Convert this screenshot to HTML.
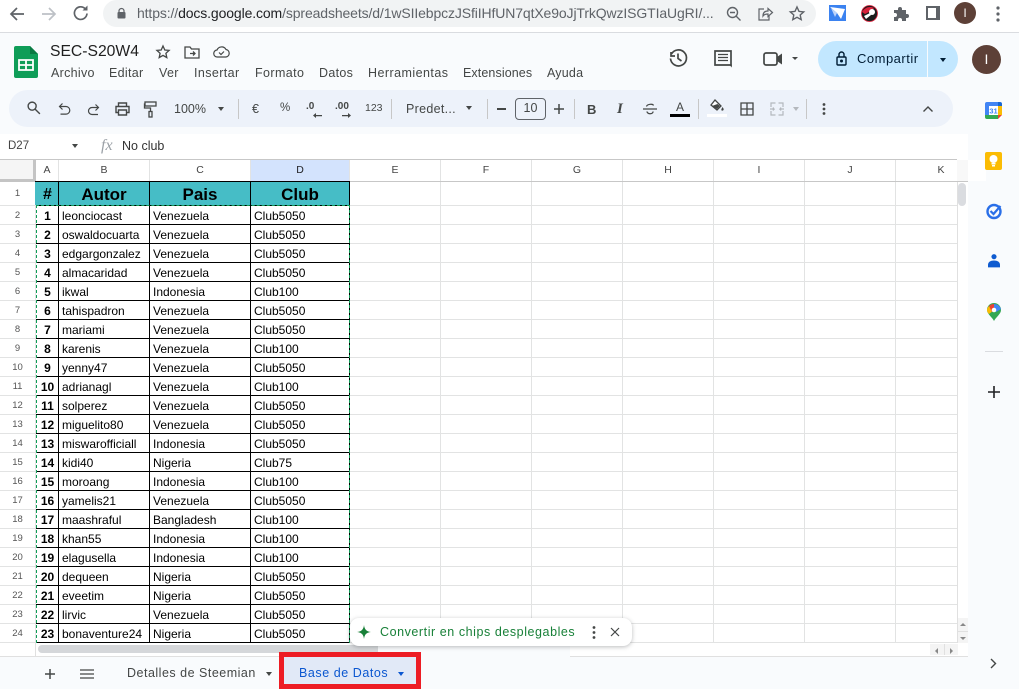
<!DOCTYPE html>
<html lang="es"><head><meta charset="utf-8"><title>SEC-S20W4</title>
<style>
html,body{margin:0;padding:0;width:1019px;height:689px;overflow:hidden;background:#f9fbfd;font-family:"Liberation Sans",sans-serif;color:#444746}
#root{position:relative;width:1019px;height:689px;overflow:hidden}
.a{position:absolute}
.t{position:absolute;white-space:nowrap;line-height:1}
svg{position:absolute;overflow:visible}
.m{font-size:12.5px;top:67px;color:#444746;letter-spacing:.3px}
.tb{font-size:12.5px;top:103px;color:#444746}
.sep{position:absolute;top:99px;width:1px;height:20px;background:#c7c7c7}
.caret{position:absolute;width:0;height:0;border-left:3.5px solid transparent;border-right:3.5px solid transparent;border-top:4px solid #444746}
.ch{position:absolute;top:160px;height:21px;line-height:21px;text-align:center;font-size:10.5px;color:#444;background:#fff}
.rn{position:absolute;left:0;width:35px;text-align:center;font-size:9.5px;color:#555;line-height:19px;height:19px}
table{position:absolute;left:35px;top:181px;border-collapse:collapse;table-layout:fixed;width:314px;background:#fff}
td{border:1px solid #000;height:19px;padding:2px 2px 0 3px;font-size:12px;line-height:16px;color:#000;white-space:nowrap;overflow:hidden;box-sizing:border-box}
tr{height:19px}
tr.h{height:24px}
tr.h td{background:#46bdc6;font-weight:bold;font-size:17px;line-height:21px;text-align:center;height:24px;padding:2px 0 0}
td:first-child{font-weight:bold;text-align:center;font-size:12px;padding:2px 0 0 1px}
tr.h td:first-child{font-size:16px;padding:2px 0 0 1px}
</style></head><body><div id="root">

<!-- browser bar -->
<div class="a" style="left:0;top:0;width:1019px;height:32px;background:#fff;border-bottom:1px solid #dadce0"></div>
<svg style="left:8px;top:4px" width="20" height="20" viewBox="0 0 20 20" fill="none" stroke="#5f6368" stroke-width="1.700"><path d="M16 10H3M9 4l-6 6 6 6"/></svg>
<svg style="left:39px;top:4px" width="20" height="20" viewBox="0 0 20 20" fill="none" stroke="#bdc1c6" stroke-width="1.700"><path d="M3 10h13M10 4l6 6-6 6"/></svg>
<svg style="left:71px;top:3px" width="20" height="20" viewBox="0 0 20 20" fill="none" stroke="#5f6368" stroke-width="1.700"><path d="M16 10.500A6.300 6.300 0 1 1 14 5.500"/><path d="M16.500 2.500V7.500H11.500z" fill="#5f6368" stroke="none"/></svg>
<div class="a" style="left:103px;top:0;width:713px;height:27px;background:#f1f3f4;border-radius:14px"></div>
<svg style="left:117px;top:8px" width="9" height="11" viewBox="0 0 9 11"><path d="M2 4.500V3a2.500 2.500 0 0 1 5 0v1.500" fill="none" stroke="#5f6368" stroke-width="1.200"/><rect x=".5" y="4" width="8" height="6.500" rx="1" fill="#5f6368"/></svg>
<div class="t" style="left:137px;top:6px;font-size:14px;letter-spacing:-.12px;color:#5f6368">https://<span style="color:#202124">docs.google.com</span>/spreadsheets/d/1wSIIebpczJSfiIHfUN7qtXe9oJjTrkQwzISGTIaUgRI/...</div>
<svg style="left:726px;top:6px" width="15" height="15" viewBox="0 0 15 15" fill="none" stroke="#5f6368" stroke-width="1.400"><circle cx="6.500" cy="6.500" r="5"/><path d="M10 10l4.500 4.500M4 6.500h5"/></svg>
<svg style="left:758px;top:7px" width="15" height="14" viewBox="0 0 15 14" fill="none" stroke="#5f6368" stroke-width="1.200"><path d="M6 2H1v11h10V9"/><path d="M5 9c0-3.500 2-5 5-5V1.500l4.500 4-4.500 4V7C8 7 6 7.500 5 9z"/></svg>
<svg style="left:789px;top:6px" width="16" height="15" viewBox="0 0 16 15" fill="none" stroke="#5f6368" stroke-width="1.400"><path d="M8 1l2 4.400 4.700.5-3.500 3.100 1 4.600L8 11.300l-4.200 2.300 1-4.600L1.300 5.900 6 5.400z"/></svg>
<svg style="left:829px;top:5px" width="17" height="16" viewBox="0 0 17 16"><rect width="17" height="16" fill="#3b82f0"/><path d="M1 2l15 2-4 10-4-6z" fill="#fff"/><path d="M2 3l6 5-2 4z" fill="#bcd3fb"/></svg>
<svg style="left:861px;top:5px" width="17" height="17" viewBox="0 0 17 17"><circle cx="8.500" cy="8.500" r="8" fill="#1c1c1c" stroke="#d8213b" stroke-width=".8"/><path d="M1 7C4 2 9 1 13 3l-3 3-6 3z" fill="#d8213b"/><circle cx="11" cy="7" r="3" fill="#fff"/><path d="M3 11l6-3 1 2-5 4z" fill="#fff"/></svg>
<svg style="left:893px;top:6px" width="16" height="16" viewBox="0 0 16 16"><path d="M1 4h4V3a2 2 0 0 1 4 0v1h4v4h1a2 2 0 0 1 0 4h-1v3H9v-1a2 2 0 0 0-4 0v1H1v-4h1a2 2 0 0 0 0-4H1z" fill="#5f6368"/></svg>
<div class="a" style="left:926px;top:6px;width:8px;height:10px;border:2px solid #5f6368;border-right-width:4px;background:#fff"></div>
<div class="a" style="left:954px;top:2px;width:22px;height:22px;border-radius:50%;background:#5d4037"></div>
<div class="t" style="left:954px;top:7px;width:22px;text-align:center;font-size:12px;color:#fff">I</div>
<svg style="left:995px;top:6px" width="6" height="16" viewBox="0 0 6 16" fill="#5f6368"><circle cx="3" cy="2" r="1.600"/><circle cx="3" cy="8" r="1.600"/><circle cx="3" cy="14" r="1.600"/></svg>

<!-- sheets header -->
<svg style="left:14px;top:46px" width="24" height="32" viewBox="0 0 24 32"><path d="M2 0h14l8 8v22a2 2 0 0 1-2 2H2a2 2 0 0 1-2-2V2a2 2 0 0 1 2-2z" fill="#0f9d58"/><path d="M16 0l8 8h-8z" fill="#0a7a43"/><path d="M5 14h14v10H5z" fill="none" stroke="#fff" stroke-width="1.800"/><path d="M5 19h14M12 14v10" stroke="#fff" stroke-width="1.800"/></svg>
<div class="t" style="left:50px;top:44px;font-size:15.700px;color:#1f1f1f">SEC-S20W4</div>
<svg style="left:155px;top:44px" width="16" height="16" viewBox="0 0 16 16" fill="none" stroke="#444746" stroke-width="1.300"><path d="M8 2l1.800 4 4.300.4-3.200 2.900.9 4.300L8 11.400l-3.800 2.200.9-4.300L1.900 6.400 6.200 6z"/></svg>
<svg style="left:184px;top:45px" width="16" height="14" viewBox="0 0 16 14" fill="none" stroke="#444746" stroke-width="1.300"><path d="M1 2h5l1.500 2H15v9H1z"/><path d="M6 8.500h5M9 6.500l2 2-2 2"/></svg>
<svg style="left:213px;top:45px" width="17" height="13" viewBox="0 0 17 13" fill="none" stroke="#444746" stroke-width="1.200"><path d="M4.500 12a3.500 3.500 0 0 1-.5-7A5 5 0 0 1 13 4.500 3.800 3.800 0 0 1 13 12z"/><path d="M6 7.500l2 2 3-3"/></svg>
<div class="t m" style="left:51px">Archivo</div>
<div class="t m" style="left:109px">Editar</div>
<div class="t m" style="left:159px">Ver</div>
<div class="t m" style="left:194px;letter-spacing:.4px">Insertar</div>
<div class="t m" style="left:255px;letter-spacing:.4px">Formato</div>
<div class="t m" style="left:319px">Datos</div>
<div class="t m" style="left:368px;letter-spacing:.45px">Herramientas</div>
<div class="t m" style="left:463px;letter-spacing:.1px">Extensiones</div>
<div class="t m" style="left:547px;letter-spacing:.2px">Ayuda</div>

<svg style="left:668px;top:48px" width="20" height="20" viewBox="0 0 20 20" fill="none" stroke="#444746" stroke-width="1.700"><path d="M3 4v4h4"/><path d="M2.500 10.500A8 8 0 1 0 3.500 6"/><path d="M10 5.500V10.500l3.500 2.500"/></svg>
<svg style="left:714px;top:50px" width="19" height="18" viewBox="0 0 19 18" fill="none" stroke="#444746" stroke-width="1.700"><path d="M1 1h16v14h-2H1z"/><path d="M15 14.500h2.800V17.500z" fill="#444746" stroke="none"/><path d="M4 4.500h10M4 7.500h10M4 10.500h10" stroke-width="1.300"/></svg>
<svg style="left:763px;top:52px" width="20" height="14" viewBox="0 0 20 14" fill="none" stroke="#444746" stroke-width="1.700"><rect x="1" y="1" width="13" height="12" rx="2"/><path d="M14 5l5-3.500v11L14 9z" fill="#444746" stroke="none"/></svg>
<div class="caret" style="left:792px;top:57px;border-left-width:3px;border-right-width:3px;border-top-width:3px"></div>
<div class="a" style="left:818px;top:41px;width:140px;height:36px;border-radius:18px;background:#c2e7ff"></div>
<div class="a" style="left:927px;top:41px;width:1px;height:36px;background:#f9fbfd"></div>
<svg style="left:836px;top:51px" width="11" height="15" viewBox="0 0 11 15" fill="none" stroke="#001d35" stroke-width="1.400"><path d="M3 6V3.500a2.500 2.500 0 0 1 5 0V6"/><rect x="1" y="6" width="9" height="8" rx="1"/><circle cx="5.500" cy="10" r=".8" fill="#001d35"/></svg>
<div class="t" style="left:857px;top:52px;font-size:13px;letter-spacing:.5px;color:#001d35">Compartir</div>
<div class="caret" style="left:940px;top:58px;border-top-color:#001d35"></div>
<div class="a" style="left:972px;top:45px;width:29px;height:29px;border-radius:50%;background:#5d4037"></div>
<div class="t" style="left:972px;top:52px;width:29px;text-align:center;font-size:14px;color:#fff">I</div>

<!-- toolbar -->
<div class="a" style="left:9px;top:90px;width:944px;height:37px;border-radius:19px;background:#edf2fa"></div>
<svg style="left:27px;top:101px" width="14" height="14" viewBox="0 0 15 15" fill="none" stroke="#444746" stroke-width="1.500"><circle cx="5.500" cy="5.500" r="4.300"/><path d="M8.800 8.800l5 5"/></svg>
<svg style="left:58px;top:102px" width="13" height="14" viewBox="0 0 13 14" fill="none" stroke="#444746" stroke-width="1.200"><path d="M4.500 1.500L1.500 4.500l3 3"/><path d="M1.500 4.500H8a3.800 3.800 0 0 1 0 7.600H2.500"/></svg>
<svg style="left:87px;top:102px" width="13" height="14" viewBox="0 0 13 14" fill="none" stroke="#444746" stroke-width="1.200"><path d="M8.500 2.500l3 3-3 3"/><path d="M11.500 5.500H5a3.500 3.500 0 0 0 0 7h6"/></svg>
<svg style="left:115px;top:102px" width="15" height="14" viewBox="0 0 15 14" fill="none" stroke="#444746" stroke-width="1.400"><path d="M3.500 4V1h8v3"/><path d="M3.500 10.500H1V4.500h13v6h-2.500"/><path d="M3.500 8h8v5h-8z"/></svg>
<svg style="left:144px;top:101px" width="13" height="17" viewBox="0 0 13 17" fill="none" stroke="#444746" stroke-width="1.300"><rect x="1" y="1" width="11" height="4"/><path d="M1 3H.5v4h6v3"/><rect x="5" y="10.500" width="3" height="5.500"/></svg>
<div class="t tb" style="left:174px">100%</div>
<div class="caret" style="left:218px;top:107px"></div>
<div class="sep" style="left:238px"></div>
<div class="t tb" style="left:252px;font-size:12.500px">€</div>
<div class="t tb" style="left:280px;font-size:11.500px">%</div>
<div class="t" style="left:306px;top:102px;font-size:10px;font-weight:bold;color:#444746">.0</div>
<svg style="left:313px;top:112px" width="10" height="7" viewBox="0 0 10 7" fill="#444746"><path d="M9 3v1.200H3V6L0 3.500 3 1v2z"/></svg>
<div class="t" style="left:335px;top:102px;font-size:10px;font-weight:bold;color:#444746">.00</div>
<svg style="left:342px;top:112px" width="10" height="7" viewBox="0 0 10 7" fill="#444746"><path d="M0 3v1.200h6V6l3-2.500L6 1v2z"/></svg>
<div class="t" style="left:365px;top:103px;font-size:10.500px;color:#444746">123</div>
<div class="sep" style="left:391px"></div>
<div class="t tb" style="left:406px;letter-spacing:.3px">Predet...</div>
<div class="caret" style="left:466px;top:106px"></div>
<div class="sep" style="left:487px"></div>
<div class="a" style="left:497px;top:108px;width:9px;height:1.500px;background:#444746"></div>
<div class="a" style="left:515px;top:98px;width:29px;height:20px;border:1px solid #5f6368;border-radius:4px"></div>
<div class="t" style="left:515px;top:102px;width:31px;text-align:center;font-size:12.500px;color:#444746">10</div>
<svg style="left:554px;top:104px" width="10" height="10" viewBox="0 0 10 10" stroke="#444746" stroke-width="1.500"><path d="M0 5h10M5 0v10"/></svg>
<div class="sep" style="left:574px"></div>
<div class="t" style="left:587px;top:103px;font-size:13px;font-weight:bold;color:#444746">B</div>
<div class="t" style="left:617px;top:102px;font-size:15px;font-style:italic;font-family:'Liberation Serif',serif;font-weight:bold;color:#444746">I</div>
<svg style="left:643px;top:102px" width="14" height="14" viewBox="0 0 14 14" fill="none" stroke="#444746" stroke-width="1.200"><path d="M0 7h14M3.500 4.500C4 2 10 1.500 10.500 3.500M3.800 9.500C5 12.500 9.500 12.500 10.200 9.500"/></svg>
<div class="t" style="left:676px;top:101px;font-size:12px;color:#444746">A</div>
<div class="a" style="left:670px;top:114px;width:20px;height:3px;background:#000"></div>
<div class="sep" style="left:698px"></div>
<svg style="left:710px;top:99px" width="14" height="13" viewBox="0 0 14 13"><path d="M5 1l6 6-4 4-6-5z" fill="#fff" stroke="#444746" stroke-width="1.300"/><path d="M2 7l5.500-2L10 7l-3 3z" fill="#444746"/><path d="M12.500 8c1 1.500 1.500 2 1 3s-2 .8-2.200 0c-.1-.8.600-1.800 1.200-3z" fill="#444746"/></svg>
<div class="a" style="left:707px;top:114px;width:20px;height:3px;background:#fff"></div>
<svg style="left:740px;top:102px" width="14" height="14" viewBox="0 0 14 14" fill="none" stroke="#444746" stroke-width="1.300"><path d="M1 1h12v12H1zM1 7h12M7 1v12"/></svg>
<svg style="left:770px;top:102px" width="14" height="14" viewBox="0 0 14 14" fill="none" stroke="#b4b8bd" stroke-width="1.200"><path d="M5.500 1H1v4M1 9v4h4.500M8.500 1H13v4M13 9v4H8.500M0 7h4l-1-1.500M4 7l-1 1.500M14 7h-4l1-1.500M10 7l1 1.500"/></svg>
<div class="caret" style="left:793px;top:107px;border-top-color:#b4b8bd"></div>
<div class="sep" style="left:806px"></div>
<svg style="left:822px;top:103px" width="4" height="12" viewBox="0 0 4 12" fill="#444746"><circle cx="2" cy="1.500" r="1.400"/><circle cx="2" cy="6" r="1.400"/><circle cx="2" cy="10.500" r="1.400"/></svg>
<svg style="left:923px;top:106px" width="10" height="6" viewBox="0 0 10 6" fill="none" stroke="#444746" stroke-width="1.400"><path d="M.5 5.500L5 1l4.500 4.500"/></svg>

<!-- formula bar -->
<div class="a" style="left:0;top:134px;width:968px;height:26px;background:#fff"></div>
<div class="t" style="left:8px;top:141px;font-size:11.500px;color:#444">D27</div>
<div class="caret" style="left:72px;top:144px"></div>
<div class="t" style="left:101px;top:138px;font-size:16px;font-style:italic;font-family:'Liberation Serif',serif;color:#9aa0a6">fx</div>
<div class="t" style="left:122px;top:140px;font-size:12.500px;color:#333">No club</div>

<!-- grid -->
<div class="a" style="left:0;top:159px;width:957px;height:484px;background:#fff"></div>
<div class="a" style="left:0;top:206px;width:957px;height:437px;background-image:repeating-linear-gradient(to bottom,transparent 0,transparent 18px,#e2e3e3 18px,#e2e3e3 19px)"></div>
<svg style="left:0;top:159px" width="957" height="484" viewBox="0 0 957 484" shape-rendering="crispEdges" stroke="#e2e3e3" fill="none"><path d="M35.500 0V484M58.500 0V23M149.500 0V23M250.500 0V23M349.500 0V484M440.500 0V484M531.500 0V484M622.500 0V484M713.500 0V484M804.500 0V484M895.500 0V484M0 46.500H957"/><path d="M0 .5H957M0 22.500H957" stroke="#c7c7c7"/></svg>
<div class="a" style="left:0;top:160px;width:36px;height:22px;background:#f5f5f5;border-right:3px solid #c4c4c4;border-bottom:3px solid #c4c4c4;box-sizing:border-box"></div>
<div class="ch" style="left:36px;width:22px">A</div>
<div class="ch" style="left:59px;width:90px">B</div>
<div class="ch" style="left:150px;width:100px">C</div>
<div class="ch" style="left:251px;width:98px;background:#d3e3fd;color:#202124">D</div>
<div class="ch" style="left:350px;width:90px">E</div>
<div class="ch" style="left:441px;width:90px">F</div>
<div class="ch" style="left:532px;width:90px">G</div>
<div class="ch" style="left:623px;width:90px">H</div>
<div class="ch" style="left:714px;width:90px">I</div>
<div class="ch" style="left:805px;width:90px">J</div>
<div class="ch" style="left:896px;width:90px">K</div>

<div class="rn" style="top:183px;line-height:21px">1</div>
<div class="rn" style="top:206px">2</div><div class="rn" style="top:225px">3</div><div class="rn" style="top:244px">4</div><div class="rn" style="top:263px">5</div><div class="rn" style="top:282px">6</div><div class="rn" style="top:301px">7</div><div class="rn" style="top:320px">8</div><div class="rn" style="top:339px">9</div><div class="rn" style="top:358px">10</div><div class="rn" style="top:377px">11</div><div class="rn" style="top:396px">12</div><div class="rn" style="top:415px">13</div><div class="rn" style="top:434px">14</div><div class="rn" style="top:453px">15</div><div class="rn" style="top:472px">16</div><div class="rn" style="top:491px">17</div><div class="rn" style="top:510px">18</div><div class="rn" style="top:529px">19</div><div class="rn" style="top:548px">20</div><div class="rn" style="top:567px">21</div><div class="rn" style="top:586px">22</div><div class="rn" style="top:605px">23</div><div class="rn" style="top:624px">24</div>

<table><colgroup><col style="width:23px"><col style="width:91px"><col style="width:101px"><col style="width:99px"></colgroup>
<tr class="h"><td>#</td><td>Autor</td><td>Pais</td><td>Club</td></tr>
<tr><td>1</td><td>leonciocast</td><td>Venezuela</td><td>Club5050</td></tr>
<tr><td>2</td><td>oswaldocuarta</td><td>Venezuela</td><td>Club5050</td></tr>
<tr><td>3</td><td>edgargonzalez</td><td>Venezuela</td><td>Club5050</td></tr>
<tr><td>4</td><td>almacaridad</td><td>Venezuela</td><td>Club5050</td></tr>
<tr><td>5</td><td>ikwal</td><td>Indonesia</td><td>Club100</td></tr>
<tr><td>6</td><td>tahispadron</td><td>Venezuela</td><td>Club5050</td></tr>
<tr><td>7</td><td>mariami</td><td>Venezuela</td><td>Club5050</td></tr>
<tr><td>8</td><td>karenis</td><td>Venezuela</td><td>Club100</td></tr>
<tr><td>9</td><td>yenny47</td><td>Venezuela</td><td>Club5050</td></tr>
<tr><td>10</td><td>adrianagl</td><td>Venezuela</td><td>Club100</td></tr>
<tr><td>11</td><td>solperez</td><td>Venezuela</td><td>Club5050</td></tr>
<tr><td>12</td><td>miguelito80</td><td>Venezuela</td><td>Club5050</td></tr>
<tr><td>13</td><td>miswarofficiall</td><td>Indonesia</td><td>Club5050</td></tr>
<tr><td>14</td><td>kidi40</td><td>Nigeria</td><td>Club75</td></tr>
<tr><td>15</td><td>moroang</td><td>Indonesia</td><td>Club100</td></tr>
<tr><td>16</td><td>yamelis21</td><td>Venezuela</td><td>Club5050</td></tr>
<tr><td>17</td><td>maashraful</td><td>Bangladesh</td><td>Club100</td></tr>
<tr><td>18</td><td>khan55</td><td>Indonesia</td><td>Club100</td></tr>
<tr><td>19</td><td>elagusella</td><td>Indonesia</td><td>Club100</td></tr>
<tr><td>20</td><td>dequeen</td><td>Nigeria</td><td>Club5050</td></tr>
<tr><td>21</td><td>eveetim</td><td>Nigeria</td><td>Club5050</td></tr>
<tr><td>22</td><td>lirvic</td><td>Venezuela</td><td>Club5050</td></tr>
<tr><td>23</td><td>bonaventure24</td><td>Nigeria</td><td>Club5050</td></tr>
</table>
<!-- hide outer table edge so only the dashed selection shows -->
<div class="a" style="left:35px;top:182px;width:1px;height:23px;background:#46bdc6"></div>
<div class="a" style="left:35px;top:205px;width:1px;height:438px;background:#e2e3e3"></div>
<!-- dashed copy selection -->
<div class="a" style="left:36px;top:205px;width:314px;height:438px;border:1px dashed #0f9d58;border-bottom:none;box-sizing:border-box"></div>

<!-- scrollbars -->
<div class="a" style="left:957px;top:182px;width:11px;height:461px;background:#fff;border-left:1px solid #e0e0e0;box-sizing:border-box"></div>
<div class="a" style="left:958px;top:183px;width:8px;height:23px;border-radius:4px;background:#dadce0"></div>
<div class="a" style="left:957px;top:160px;width:11px;height:22px;background:#f8f8f8;border-bottom:1px solid #c7c7c7;box-sizing:border-box"></div>
<div class="a" style="left:958px;top:618px;width:10px;height:27px;background:#f4f4f4"></div>
<div class="a" style="left:958px;top:631px;width:10px;height:1px;background:#e0e0e0"></div>
<div class="a" style="left:960px;top:623px;width:0;height:0;border-left:3px solid transparent;border-right:3px solid transparent;border-bottom:3px solid #888"></div>
<div class="a" style="left:960px;top:637px;width:0;height:0;border-left:3px solid transparent;border-right:3px solid transparent;border-top:3px solid #888"></div>
<div class="a" style="left:0;top:643px;width:378px;height:13px;background:#fff"></div>
<div class="a" style="left:378px;top:643px;width:192px;height:13px;background:#f9fbfd"></div>
<div class="a" style="left:570px;top:643px;width:398px;height:13px;background:#fff"></div>
<div class="a" style="left:35px;top:643px;width:1px;height:13px;background:#e0e0e0"></div>
<div class="a" style="left:38px;top:645px;width:340px;height:8px;border-radius:4px 0 0 4px;background:#d5d7da"></div>
<div class="a" style="left:930px;top:644px;width:28px;height:11px;background:#f4f4f4"></div>
<div class="a" style="left:944px;top:644px;width:1px;height:11px;background:#e0e0e0"></div>
<div class="a" style="left:935px;top:648px;width:0;height:0;border-top:3px solid transparent;border-bottom:3px solid transparent;border-right:3px solid #888"></div>
<div class="a" style="left:950px;top:648px;width:0;height:0;border-top:3px solid transparent;border-bottom:3px solid transparent;border-left:3px solid #888"></div>

<!-- bottom tabs -->
<div class="a" style="left:0;top:656px;width:280px;height:1px;background:#e0e0e0"></div>
<div class="a" style="left:570px;top:656px;width:398px;height:1px;background:#e0e0e0"></div>
<svg style="left:45px;top:669px" width="10" height="10" viewBox="0 0 10 10" stroke="#444746" stroke-width="1.500"><path d="M0 5h10M5 0v10"/></svg>
<svg style="left:80px;top:669px" width="14" height="10" viewBox="0 0 14 10" stroke="#444746" stroke-width="1.300"><path d="M0 1h14M0 5h14M0 9h14"/></svg>
<div class="t" style="left:127px;top:667px;font-size:12.500px;letter-spacing:.5px;color:#444746">Detalles de Steemian</div>
<div class="caret" style="left:266px;top:672px"></div>
<div class="a" style="left:279px;top:652px;width:142px;height:37px;background:#e1e9f7;border:5px solid #ed1c24;box-sizing:border-box"></div>
<div class="t" style="left:299px;top:667px;font-size:12.500px;letter-spacing:.55px;color:#0b57d0">Base de Datos</div>
<div class="caret" style="left:398px;top:672px;border-top-color:#0b57d0"></div>

<!-- toast -->
<div class="a" style="left:350px;top:618px;width:282px;height:28px;border-radius:9px;background:#fff;box-shadow:0 1px 4px rgba(60,64,67,.35)"></div>
<svg style="left:357px;top:625px" width="14" height="14" viewBox="0 0 14 14"><path d="M7 0C7.500 4.500 9.500 6.500 14 7 9.500 7.500 7.500 9.500 7 14 6.500 9.500 4.500 7.500 0 7 4.500 6.500 6.500 4.500 7 0z" fill="#188038"/></svg>
<div class="t" style="left:380px;top:626px;font-size:12.500px;letter-spacing:.56px;color:#188038">Convertir en chips desplegables</div>
<svg style="left:592px;top:626px" width="4" height="13" viewBox="0 0 4 13" fill="#444746"><circle cx="2" cy="1.500" r="1.400"/><circle cx="2" cy="6.500" r="1.400"/><circle cx="2" cy="11.500" r="1.400"/></svg>
<svg style="left:610px;top:627px" width="10" height="10" viewBox="0 0 10 10" stroke="#444746" stroke-width="1.200"><path d="M1 1l8 8M9 1l-8 8"/></svg>

<!-- side panel -->
<svg style="left:985px;top:102px" width="17" height="17" viewBox="0 0 17 17"><rect width="17" height="17" rx="1.500" fill="#fff"/><path d="M0 2Q0 0 2 0H13V4H4V13H0z" fill="#4285f4"/><path d="M13 0h2q2 0 2 2v2h-4z" fill="#1967d2"/><path d="M13 4h4v9h-4z" fill="#fbbc04"/><path d="M4 13h9v4H2q-2 0-2-2v-2z" fill="#34a853"/><path d="M13 13h4l-4 4z" fill="#ea4335"/><text x="8.500" y="11.500" font-size="7.500" font-weight="bold" text-anchor="middle" fill="#4285f4" font-family="Liberation Sans">31</text></svg>
<div class="a" style="left:985px;top:152px;width:17px;height:18px;border-radius:2px;background:#fbbc04"></div>
<svg style="left:989px;top:155px" width="9" height="12" viewBox="0 0 9 12"><circle cx="4.500" cy="4" r="4" fill="#fff"/><rect x="2.500" y="8" width="4" height="1.500" fill="#fff"/><rect x="3" y="10" width="3" height="1.500" fill="#fff"/></svg>
<svg style="left:986px;top:203px" width="17" height="16" viewBox="0 0 17 16" fill="none"><circle cx="8" cy="8.500" r="6.500" stroke="#2a6fe8" stroke-width="2.400"/><path d="M4.500 8l3 3 7-8" stroke="#2a6fe8" stroke-width="2.200"/></svg>
<svg style="left:988px;top:253px" width="12" height="15" viewBox="0 0 14 16" fill="#0f5bd0"><circle cx="7" cy="3.500" r="3"/><path d="M0 16v-3c0-3 3-5 7-5s7 2 7 5v3z"/></svg>
<svg style="left:987px;top:304px" width="14" height="17" viewBox="0 0 14 17"><path d="M7 17C5 13 0 10 0 6a7 7 0 0 1 14 0c0 4-5 7-7 11z" fill="#34a853"/><path d="M2 2L7 6 2 10Q0 8 0 6q0-2 2-4z" fill="#fbbc04"/><path d="M2 2Q4 0 7 0L9 3 5 8z" fill="#ea4335"/><path d="M7 0q5 0 7 5L9 8 7 5z" fill="#4285f4"/><circle cx="7" cy="6" r="2.300" fill="#fff"/></svg>
<div class="a" style="left:985px;top:351px;width:18px;height:1px;background:#dadce0"></div>
<svg style="left:988px;top:386px" width="12" height="12" viewBox="0 0 12 12" stroke="#202124" stroke-width="1.600"><path d="M0 6h12M6 0v12"/></svg>
<svg style="left:990px;top:658px" width="7" height="11" viewBox="0 0 7 11" fill="none" stroke="#444746" stroke-width="1.400"><path d="M1 1l4.500 4.500L1 10"/></svg>
</div></body></html>
